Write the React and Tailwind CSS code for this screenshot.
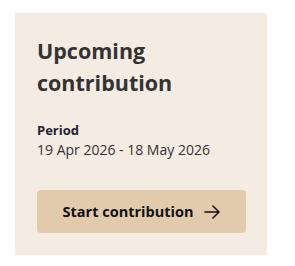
export default function App() {
  return (
    <div className="w-[295px] h-[266px] bg-white pt-[13px] pl-[15px]" style={{ fontFamily: '"Open Sans", sans-serif' }}>
      <div className="w-[252px] h-[242px] bg-[#f4ebe2] pl-[22px] pr-[21px] pt-[22px]">
        <h2 className="text-[21.5px] leading-[32px] font-bold text-[#333333]">Upcoming<br />contribution</h2>
        <div className="mt-[22px] text-[13px] leading-[18px] font-bold text-[#1f2633]">Period</div>
        <div className="mt-[1px] text-[14px] leading-[20px] text-[#333333]">19 Apr 2026 - 18 May 2026</div>
        <button className="mt-[30px] w-[209px] h-[43px] rounded-[4px] bg-[#e2cbad] flex items-center justify-center gap-[11px] text-[14.5px] font-bold text-[#111111]">
          <span>Start contribution</span>
          <svg width="16" height="14" viewBox="0 0 16 14" fill="none" stroke="#111" strokeWidth="1.6" strokeLinecap="round" strokeLinejoin="round">
            <path d="M1 7h14M9 1l6 6-6 6" />
          </svg>
        </button>
      </div>
    </div>
  );
}
